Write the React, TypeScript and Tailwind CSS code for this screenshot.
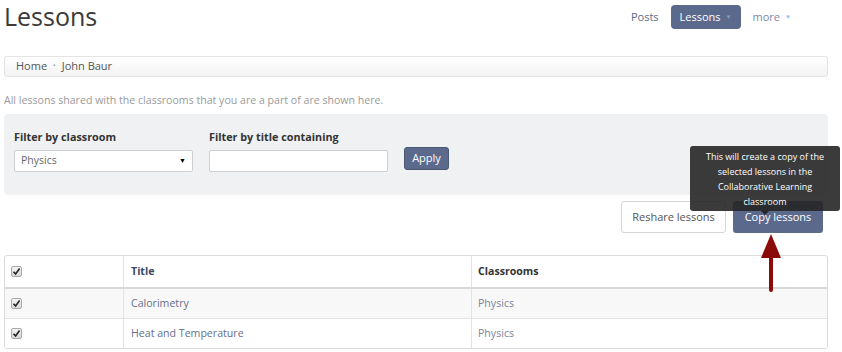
export default function App() {
  const rows = [
    { title: "Calorimetry", classroom: "Physics" },
    { title: "Heat and Temperature", classroom: "Physics" },
  ];

  return (
    <main
      className="relative w-[842px] h-[352px] overflow-hidden bg-white text-[#333]"
      style={{ fontFamily: '"Open Sans", "Liberation Sans", sans-serif' }}
    >
      <div className="w-[824px] ml-[4px]">
        {/* HEADER */}
        <div className="flex items-start justify-between h-[50px]">
          <h1 className="text-[25px] leading-[32px] text-[#3a3a3a]">Lessons</h1>
          <nav className="flex items-center gap-[12px] mt-[5px] mr-[37px] text-[11px]">
            <span className="text-[#5a6a8a]">Posts</span>
            <span className="flex items-center h-[24px] px-[9px] rounded-[4px] bg-[#5b6a8c] text-white">
              Lessons
              <span className="ml-[5px] text-[6px] text-[#8e9ab4]">▼</span>
            </span>
            <span className="flex items-center text-[#7a8aa8]">
              more
              <span className="ml-[5px] text-[6px] text-[#8fbfe8]">▼</span>
            </span>
          </nav>
        </div>

        {/* BREADCRUMB */}
        <div className="mt-[6px] h-[21px] flex items-center px-[11px] border border-[#e3e3e3] rounded-[3px] bg-gradient-to-b from-white to-[#f3f3f3] text-[11px] text-[#555]">
          <span>Home</span>
          <span className="mx-[6px] text-[7px] text-[#999]">•</span>
          <span>John Baur</span>
        </div>

        <p className="mt-[16px] leading-[14px] text-[10.6px] text-[#9a9a9a]">
          All lessons shared with the classrooms that you are a part of are shown here.
        </p>

        {/* FILTERS */}
        <div className="mt-[7px] h-[81px] rounded-[4px] bg-[#f0f1f3] px-[10px] pt-[15px] flex items-start gap-[16px]">
          <div className="flex flex-col">
            <label className="text-[10.8px] font-bold text-[#333] leading-[16px]">Filter by classroom</label>
            <div className="mt-[5px] w-[179px] h-[22px] bg-white border border-[#cfcfcf] rounded-[2px] flex items-center justify-between px-[6px] text-[10.5px] text-[#666]">
              <span>Physics</span>
              <span className="text-[7px] text-black">▼</span>
            </div>
          </div>
          <div className="flex flex-col">
            <label className="text-[10.8px] font-bold text-[#333] leading-[16px]">Filter by title containing</label>
            <div className="mt-[5px] w-[179px] h-[22px] bg-white border border-[#cfcfcf] rounded-[2px]" />
          </div>
          <button className="mt-[18px] h-[23px] w-[45px] rounded-[3px] bg-[#5b6a8c] border border-[#4a5876] text-white text-[11px]">
            Apply
          </button>
        </div>

        {/* ACTIONS */}
        <div className="mt-[6px] flex justify-end gap-[7px] pr-[5px]">
          <button className="h-[32px] w-[105px] border border-[#d5d5d5] rounded-[3px] bg-white text-[11px] text-[#555]">
            Reshare lessons
          </button>
          <button className="h-[32px] w-[90px] rounded-[3px] bg-[#5b6a8c] text-[11px] text-white">
            Copy lessons
          </button>
        </div>

        {/* TABLE */}
        <div className="mt-[22px] border border-[#dcdcdc] rounded-[3px] overflow-hidden text-[10.6px]">
          <div className="flex h-[33px] border-b-[2px] border-[#d8d8d8]">
            <div className="w-[119px] flex items-center pl-[6px] border-r border-[#e3e3e3]">
              <Check />
            </div>
            <div className="w-[348px] flex items-center pl-[7px] border-r border-[#e3e3e3] font-bold text-[#3d4a66]">
              Title
            </div>
            <div className="flex-1 flex items-center pl-[6px] font-bold text-[#333]">Classrooms</div>
          </div>
          {rows.map((r, i) => (
            <div
              key={i}
              className={`flex ${i === 0 ? "h-[30px] bg-[#f8f8f8] border-b border-[#e3e3e3]" : "h-[29px] bg-white"}`}
            >
              <div className="w-[119px] flex items-center pl-[6px] border-r border-[#e3e3e3]">
                <Check />
              </div>
              <div className="w-[348px] flex items-center pl-[7px] border-r border-[#e3e3e3] text-[#66708a]">
                {r.title}
              </div>
              <div className="flex-1 flex items-center pl-[6px] text-[#7d8498]">{r.classroom}</div>
            </div>
          ))}
        </div>
      </div>

      {/* TOOLTIP */}
      <div className="absolute left-[690px] top-[146px] w-[150px] h-[65px] rounded-[3px] bg-[#262626]/90 text-white text-[9px] leading-[15px] text-center pt-[3px]">
        This will create a copy of the
        <br />
        selected lessons in the
        <br />
        Collaborative Learning
        <br />
        classroom
        <div className="absolute left-[71px] -bottom-[4px] w-0 h-0 border-l-[4px] border-r-[4px] border-t-[4px] border-l-transparent border-r-transparent border-t-[#262626]" />
      </div>

      {/* ARROW */}
      <svg className="absolute left-[758px] top-[232px]" width="26" height="62" viewBox="0 0 26 62">
        <polygon points="13,2 23,26 3,26" fill="#8b0b0b" />
        <rect x="11" y="20" width="4" height="40" rx="2" fill="#8b0b0b" />
      </svg>
    </main>
  );
}

function Check() {
  return (
    <span className="w-[11px] h-[11px] rounded-[2px] border border-[#a8a8a8] bg-gradient-to-b from-[#f4f4f4] to-[#d8d8d8] flex items-center justify-center">
      <svg width="9" height="9" viewBox="0 0 9 9">
        <path d="M1.5 4.8 L3.6 7 L7.6 1.6" stroke="#222" strokeWidth="1.6" fill="none" />
      </svg>
    </span>
  );
}
